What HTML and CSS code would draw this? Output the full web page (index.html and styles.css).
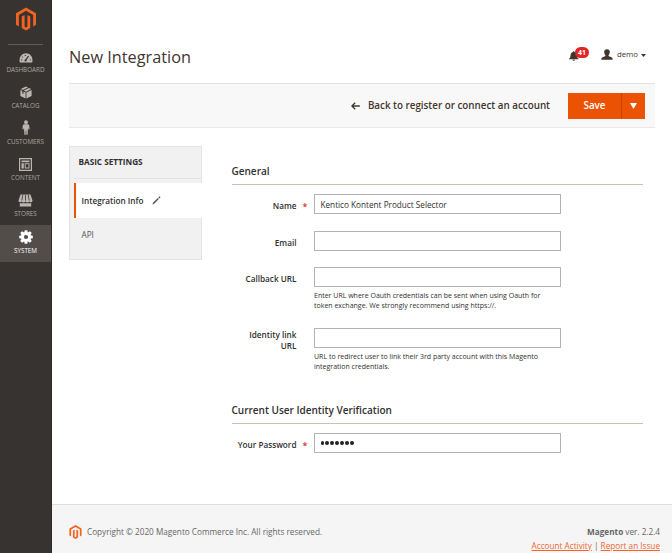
FILE: index.html
```html
<!DOCTYPE html>
<html lang="en">
<head>
<meta charset="utf-8">
<title>New Integration</title>
<link rel="stylesheet" href="styles.css">
</head>
<body>
<svg width="0" height="0" class="defs">
  <symbol id="magento" viewBox="0 0 40 46"><path d="M20 0 40 11.5v23l-5.7 3.3V15L20 6.600 5.700 15v22.800L0 34.500v-23z"/><path d="M11.500 18.200 17.200 15v23.200l2.800 1.600 2.800-1.600V15l5.700 3.200v23L20 46l-8.500-4.800z"/></symbol>
</svg>
<nav class="menu">
  <a class="logo"><svg class="logo-mark"><use href="#magento"/></svg></a>
  <a class="item"><svg width="14" height="10" viewBox="0 0 14 10"><path fill="currentColor" d="M.8 9.500C-.4 4 3 .3 7 .3s7.400 3.700 6.200 9.200z"/><path d="M6.500 7.500 9.500 3" stroke="#373330" stroke-width="1.300"/><g fill="#373330"><circle cx="6.500" cy="7.500" r="1.100"/><circle cx="2.600" cy="6.800" r=".6"/><circle cx="3.500" cy="4" r=".6"/><circle cx="6.200" cy="2.400" r=".6"/><circle cx="11.300" cy="6.800" r=".6"/></g></svg><span>DASHBOARD</span></a>
  <a class="item"><svg width="12" height="13" viewBox="0 0 12 13"><g fill="currentColor"><path d="M6 .5 8 1.400 2.700 4 .8 3.100zM9 1.900l2.200 1.200L6 5.700 3.800 4.500zM.4 4l1.900 1v2.300l1.200.6V5.600l2.100 1v5.900L.4 9.900zM11.600 4v5.900l-5.200 2.600V6.600z"/></g></svg><span>CATALOG</span></a>
  <a class="item"><svg width="8" height="15" viewBox="0 0 8 15"><circle cx="4" cy="2.200" r="1.900" fill="currentColor"/><path fill="currentColor" d="M2.200 4.300h3.600c1.100 0 1.300.8 1.500 2l.3 2.900-1.100.3-.5-2-.4 7.300H4.300V10.500h-.6v4.300H2.400L2 7.500l-.5 2-1.100-.3.300-2.900c.2-1.200.4-2 1.500-2z"/></svg><span>CUSTOMERS</span></a>
  <a class="item"><svg width="13" height="13" viewBox="0 0 13 13"><path fill="none" stroke="currentColor" stroke-width="1.200" d="M.6.6h11.800v11.800H.6z"/><path fill="currentColor" d="M2.500 2.600h8v1.700h-8zM2.500 5.200h2.300v5.300H2.500zM5.700 5.200h4.800v5.300H5.700z"/><path fill="#373330" d="M6.700 6.200h2.800v3.300H6.700z"/></svg><span>CONTENT</span></a>
  <a class="item"><svg width="15" height="13" viewBox="0 0 15 13"><path fill="currentColor" d="M2.500.5h10l2 6c0 2-2.200 2.400-3.200 1.100-.8 1.300-2.800 1.300-3.800 0-1 1.300-3 1.300-3.800 0C2.700 8.900.5 8.500.5 6.500zM1.800 9.200h11.400v3.300H1.800z"/><path fill="none" stroke="#373330" stroke-width=".8" d="m4.800.5-1 6M7.500.5v6M10.200.5l1 6"/></svg><span>STORES</span></a>
  <a class="item active"><svg width="14" height="14" viewBox="-7 -7 14 14"><g fill="currentColor"><circle r="5"/><path id="tooth" d="M-1.300-6.800h2.600l.5 2.600h-3.600zM-1.300 6.800h2.600l.5-2.600h-3.600z"/><use href="#tooth" transform="rotate(45)"/><use href="#tooth" transform="rotate(90)"/><use href="#tooth" transform="rotate(135)"/></g><circle r="2.100" fill="#524d49"/></svg><span>SYSTEM</span></a>
</nav>
<div class="page">
  <header class="top">
    <h1>New Integration</h1>
    <div class="user">
      <span class="bell"><svg width="10" height="10" viewBox="0 0 11 11"><path fill="#41362f" d="M5.200.3c.6 0 .9.400.9.900C8 1.700 8.600 3 8.700 5c.1 1.800.7 2.800 1.800 3.600v.5H0v-.5C1 7.800 1.600 6.800 1.700 5c.1-2 .8-3.300 2.600-3.800 0-.5.300-.9.900-.9zM3.900 9.600h2.700c-.2 1.400-2.500 1.400-2.700 0z"/></svg><b class="badge">41</b></span>
      <svg class="person" width="12" height="11" viewBox="0 0 12 11"><path fill="#41362f" d="M6 .2c1.900 0 2.900 1.200 2.800 3C8.700 4.800 8 5.700 7.500 6.200c0 1 .5 1.200 1.700 1.600 1.800.6 2.500 1 2.500 3H.3c0-2 .7-2.400 2.500-3 1.200-.4 1.700-.6 1.700-1.600C4 5.700 3.300 4.800 3.200 3.200 3.100 1.400 4.100.2 6 .2z"/></svg>
      <span class="uname">demo</span>
      <svg width="5" height="3" viewBox="0 0 5 3"><path fill="#41362f" d="M0 0h5L2.500 3z"/></svg>
    </div>
  </header>
  <div class="actions">
    <a class="back"><svg width="9" height="8" viewBox="0 0 9 8"><path fill="none" stroke="#41362f" stroke-width="1.300" d="M8.800 4H1M4.200.7.900 4l3.300 3.300"/></svg><span>Back to register or connect an account</span></a>
    <div class="save"><span class="save-main">Save</span><span class="save-more"><svg width="7" height="6" viewBox="0 0 7 6"><path fill="#fff" d="M0 0h7L3.500 6z"/></svg></span></div>
  </div>
  <div class="content">
    <aside class="tabs">
      <h2><span>BASIC SETTINGS</span></h2>
      <a class="tab current"><span>Integration Info</span><svg width="9" height="9" viewBox="0 0 9 9"><path fill="#5a534e" d="M.5 8.500 1 6.800l4.800-4.700 1 1-4.600 4.700zM6.300 1.600 7.300.6c.5-.4 1.500.5 1 1l-1 1z"/></svg></a>
      <a class="tab api"><span>API</span></a>
    </aside>
    <main class="form">
      <h3 class="legend"><span>General</span></h3>
      <div class="row name"><label class="req">Name</label><div class="field"><div class="input"><span>Kentico Kontent Product Selector</span></div></div></div>
      <div class="row email"><label>Email</label><div class="field"><div class="input"></div></div></div>
      <div class="row callback"><label>Callback URL</label><div class="field"><div class="input"></div><p>Enter URL where Oauth credentials can be sent when using Oauth for<br>token exchange. We strongly recommend using https://.</p></div></div>
      <div class="row identity"><label>Identity link<br>URL</label><div class="field"><div class="input"></div><p>URL to redirect user to link their 3rd party account with this Magento<br>integration credentials.</p></div></div>
      <h3 class="legend second"><span>Current User Identity Verification</span></h3>
      <div class="row"><label class="req">Your Password</label><div class="field"><div class="input dots"><i></i><i></i><i></i><i></i><i></i><i></i><i></i></div></div></div>
    </main>
  </div>
  <footer>
    <div class="copy"><svg class="foot-mark"><use href="#magento"/></svg><span>Copyright © 2020 Magento Commerce Inc. All rights reserved.</span></div>
    <div class="meta"><div><b>Magento</b> ver. 2.2.4</div><div><a>Account Activity</a> | <a>Report an Issue</a></div></div>
  </footer>
</div>
</body>
</html>
```
FILE: styles.css
```css
* { box-sizing: border-box; margin: 0; padding: 0; }
body { display: flex; width: 672px; height: 553px; overflow: hidden; background: #fff; color: #41362f; font: 8.2px/11px "Open Sans", sans-serif; }
svg { display: block; flex: none; }
.defs { display: none; }
.menu { width: 52px; flex: none; background: #373330; border-right: 1px solid #2f2b28; }
.logo { display: block; height: 45px; margin: 0 8px; padding: 7px 0 0 8px; border-bottom: 1px solid #625d59; }
.logo-mark { width: 20px; height: 24px; fill: #f26322; }
.item { display: flex; flex-direction: column; align-items: center; justify-content: flex-end; height: 36.1px; padding-bottom: 6px; color: #aaa6a0; font-size: 6.3px; line-height: 11px; }
.item svg { color: #bbb7b0; margin-bottom: 1px; }
.item.active, .item.active svg { color: #fff; }
.item.active { background: #524d49; }
.page { width: 620px; height: 553px; display: flex; flex-direction: column; }
.top { display: flex; justify-content: space-between; height: 83px; padding: 45px 26px 0 17px; }
h1 { font-size: 16.3px; line-height: 24px; font-weight: 400; }
.user { display: flex; align-items: center; height: 20px; }
.bell { position: relative; width: 32px; padding-top: 1px; }
.badge { position: absolute; left: 6px; top: -3px; width: 14px; height: 11px; border-radius: 6px; background: #e22626; color: #fff; font-size: 6.8px; line-height: 11px; text-align: center; }
.person { position: relative; top: -1px; }
.uname { margin: 0 3px 0 4px; font-size: 7.8px; position: relative; top: -1px; }
.actions { display: flex; align-items: center; justify-content: flex-end; height: 45px; margin: 0 17px; padding-right: 10px; background: #f8f8f8; border-top: 1px solid #e3e3e3; border-bottom: 1px solid #e9e9e9; }
.back { display: flex; align-items: center; gap: 8px; margin-right: 18px; font-size: 9.820px; font-weight: 600; }
.save { display: flex; width: 77px; height: 26px; background: #eb5202; color: #fff; font-size: 9.820px; font-weight: 600; line-height: 26px; }
.save-main { width: 53px; text-align: center; }
.save-more { flex: 1; display: flex; align-items: center; justify-content: center; border-left: 1px solid #c24400; }
.content { display: flex; gap: 29.500px; height: 376px; padding: 18px 29px 0 17px; }
.tabs { width: 133px; height: 114px; flex: none; background: #f1f1f1; border: 1px solid #e3e3e3; }
.tabs h2 { height: 32px; margin-left: 4px; padding-left: 4.500px; border-bottom: 1px solid #e3e3e3; font-size: 8.200px; line-height: 30px; font-weight: 700; color: #303030; }
.tab { display: flex; align-items: center; gap: 9px; height: 34px; padding-left: 11.500px; font-weight: 600; color: #666; }
.tab.current { margin: 4px -1px 0 4px; padding-left: 4.500px; border-left: 2px solid #eb5202; background: #fff; height: 35px; padding-left: 5.500px; color: #303030; }
.tab.api { font-weight: 400; height: 33px; color: #555; }
.form { flex: 1; padding-top: 14px; color: #303030; }
.legend { height: 25px; padding-top: 4px; border-bottom: 1px solid #cac3b4; font-size: 10px; line-height: 14px; font-weight: 600; }
.row { display: flex; gap: 17.500px; }
.row label { position: relative; width: 65px; padding-top: 6px; text-align: right; font-weight: 600; white-space: nowrap; }
.req::after { content: "*"; position: absolute; right: -11px; top: 7px; color: #e22626; font-size: 9px; }
.field { width: 247px; }
.input { display: flex; align-items: center; height: 20px; padding-left: 5.500px; border: 1px solid #b5b3b0; background: #fff; }
.row p { margin-top: 4px; font-size: 7.000px; line-height: 9.500px; white-space: nowrap; }
.name { margin-top: 9px; height: 36.500px; }
.email { height: 36.500px; }
.callback { height: 61px; }
.identity { height: 56px; }
.identity label { padding-top: 1px; }
.second { margin-top: 15px; margin-bottom: 9px; }
.dots { gap: 1.100px; }
.dots i { width: 3.800px; height: 3.800px; border-radius: 50%; background: #222; }
footer { flex: 1; display: flex; justify-content: space-between; padding: 19.500px 12px 0 17px; background: #f5f5f5; border-top: 1px solid #dedede; color: #666; font-size: 8.200px; line-height: 14px; }
.copy { display: flex; height: 14px; align-items: center; gap: 5px; }
.foot-mark { width: 13px; height: 14px; fill: #f26322; }
.meta { text-align: right; }
.meta a { color: #ef672f; text-decoration: underline; }
```
